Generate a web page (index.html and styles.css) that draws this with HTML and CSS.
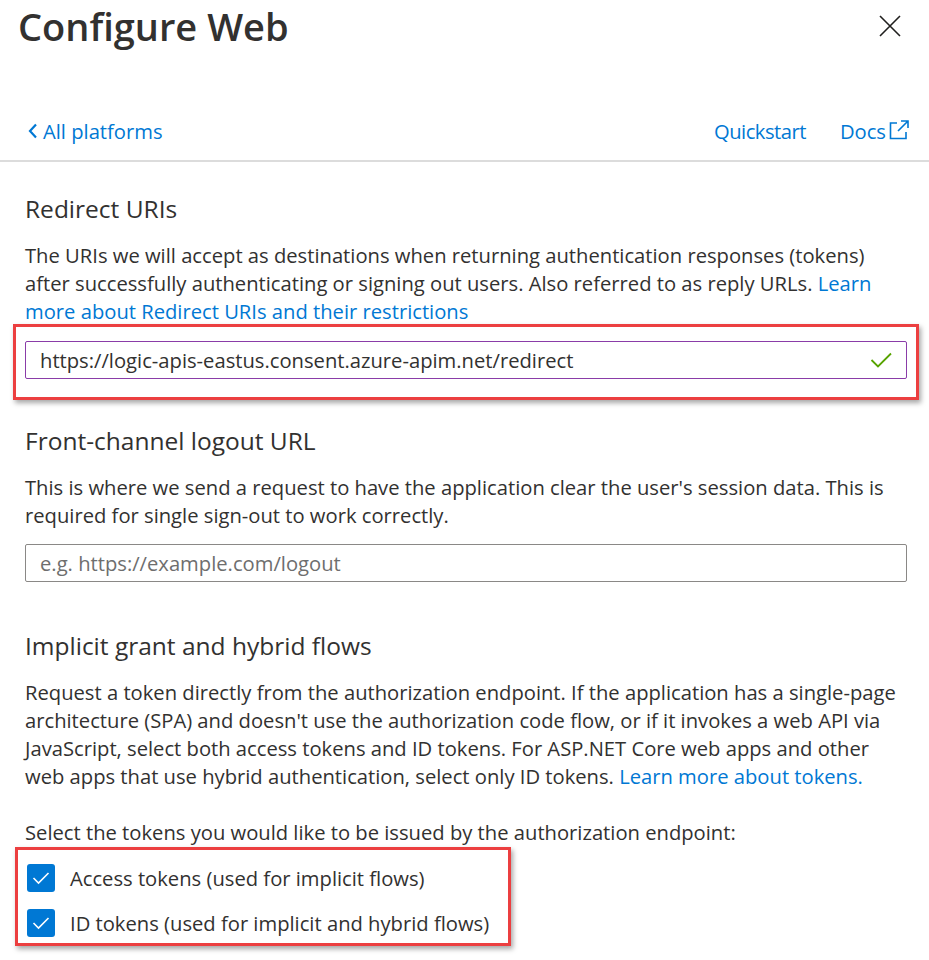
FILE: index.html
```html
<!DOCTYPE html>
<html lang="en">
<head>
<meta charset="utf-8">
<title>Configure Web</title>
<link rel="stylesheet" href="styles.css">
</head>
<body>
<div class="panel">
  <header class="titlebar">
    <h1 class="title">Configure Web</h1>
    <button class="close" aria-label="Close">
      <svg width="22" height="22" viewBox="0 0 22 22"><path d="M1 1 L21 21 M21 1 L1 21" stroke="#201f1e" stroke-width="1.6" fill="none"/></svg>
    </button>
  </header>
  <nav class="navrow">
    <a class="link back" href="#">
      <svg width="12" height="16" viewBox="0 0 12 16"><path d="M9 1.5 L3 8 L9 14.5" stroke="#0078d4" stroke-width="2.2" fill="none"/></svg>
      All platforms
    </a>
    <div class="navlinks">
      <a class="link quick" href="#">Quickstart</a>
      <a class="link docs" href="#">Docs
        <svg width="22" height="22" viewBox="0 0 22 22"><path d="M9 4 H2.5 V19.5 H18 V13" stroke="#0078d4" stroke-width="1.6" fill="none"/><path d="M10 12 L20 2 M13 2 H20 V9" stroke="#0078d4" stroke-width="1.6" fill="none"/></svg>
      </a>
    </div>
  </nav>
  <main class="content">
    <section class="section">
      <h2 class="heading">Redirect URIs</h2>
      <p class="desc">The URIs we will accept as destinations when returning authentication responses (tokens) after successfully authenticating or signing out users. Also referred to as reply URLs. <a class="link" href="#">Learn more about Redirect URIs and their restrictions</a></p>
      <div class="highlight hl-input">
        <div class="field valid">
          <span class="field-text">https://logic-apis-eastus.consent.azure-apim.net/redirect</span>
          <svg class="ok" width="22" height="16" viewBox="0 0 22 16"><path d="M1.5 8 L8 14.5 L21 1.5" stroke="#57a300" stroke-width="1.8" fill="none"/></svg>
        </div>
      </div>
    </section>
    <section class="section">
      <h2 class="heading">Front-channel logout URL</h2>
      <p class="desc">This is where we send a request to have the application clear the user's session data. This is required for single sign-out to work correctly.</p>
      <div class="field">
        <span class="field-text placeholder">e.g. https://example.com/logout</span>
      </div>
    </section>
    <section class="section flows">
      <h2 class="heading">Implicit grant and hybrid flows</h2>
      <p class="desc">Request a token directly from the authorization endpoint. If the application has a single-page architecture (SPA) and doesn't use the authorization code flow, or if it invokes a web API via JavaScript, select both access tokens and ID tokens. For ASP.NET Core web apps and other web apps that use hybrid authentication, select only ID tokens. <a class="link" href="#">Learn more about tokens.</a></p>
      <p class="desc select">Select the tokens you would like to be issued by the authorization endpoint:</p>
      <div class="highlight hl-checks">
        <label class="check"><span class="box"><svg width="18" height="14" viewBox="0 0 18 14"><path d="M1.5 7 L6.5 12 L16.5 2" stroke="#fff" stroke-width="1.6" fill="none"/></svg></span>Access tokens (used for implicit flows)</label>
        <label class="check"><span class="box"><svg width="18" height="14" viewBox="0 0 18 14"><path d="M1.5 7 L6.5 12 L16.5 2" stroke="#fff" stroke-width="1.6" fill="none"/></svg></span>ID tokens (used for implicit and hybrid flows)</label>
      </div>
    </section>
  </main>
</div>
</body>
</html>
```

FILE: styles.css
```css
* { box-sizing: border-box; }
html, body { margin: 0; padding: 0; background: #fff; }
body {
  font-family: "Open Sans", "Noto Sans", sans-serif;
  color: #323130;
  font-size: 20.2px;
  width: 929px;
  height: 960px;
  overflow: hidden;
}
.titlebar {
  display: flex;
  justify-content: space-between;
  align-items: flex-start;
  padding: 0 28px 0 18px;
}
.title {
  margin: 0;
  font-size: 38px;
  font-weight: 600;
  line-height: 52px;
  color: #323130;
}
.close {
  border: 0;
  background: none;
  padding: 0;
  margin-top: 15px;
  width: 22px;
  height: 22px;
}
.close svg { display: block; }
.navrow {
  margin-top: 60px;
  height: 50px;
  display: flex;
  justify-content: space-between;
  align-items: flex-start;
  padding: 5px 19px 0 27px;
  border-bottom: 2px solid #dcdcdc;
}
.link { color: #0078d4; text-decoration: none; }
.back { display: flex; align-items: center; gap: 4px; }
.navlinks { display: flex; gap: 34px; align-items: center; }
.quick { letter-spacing: -0.5px; }
.docs { display: flex; align-items: center; gap: 2px; }
.docs svg { margin-top: -3px; }
.content { padding: 0 22px 0 25px; }
.heading {
  margin: 0;
  font-size: 24.5px;
  font-weight: 400;
  line-height: 34px;
}
.section { padding-top: 30px; }
.section + .section { padding-top: 24px; }
.section.flows { padding-top: 47px; }
.desc {
  margin: 15px 0 0;
  line-height: 28px;
}
.field {
  height: 38px;
  border: 1px solid #8a8886;
  border-radius: 2px;
  display: flex;
  align-items: center;
  justify-content: space-between;
  padding: 0 14px 0 14px;
  margin-top: 15px;
}
.field.valid { border-color: #8a3ca8; margin-top: 0; }
.field-text { color: #323130; }
.placeholder { color: #6e6e6e; }
.highlight {
  border: 3px solid #ec3f40;
  box-shadow: 2px 3px 5px rgba(0,0,0,0.35);
}
.hl-input {
  margin: -1px -12px 0 -12px;
  padding: 14px 9px 18px 9px;
}
.select { margin-top: 28px; }
.hl-checks {
  width: 496px;
  margin: 1px 0 0 -10px;
  padding: 13px 0 5px 9px;
}
.check {
  display: flex;
  align-items: center;
  gap: 15px;
  height: 29px;
  margin-bottom: 16px;
}
.check:last-child { margin-bottom: 1px; }
.box {
  width: 28px;
  height: 28px;
  background: #0078d4;
  border-radius: 3px;
  display: flex;
  align-items: center;
  justify-content: center;
}
```
